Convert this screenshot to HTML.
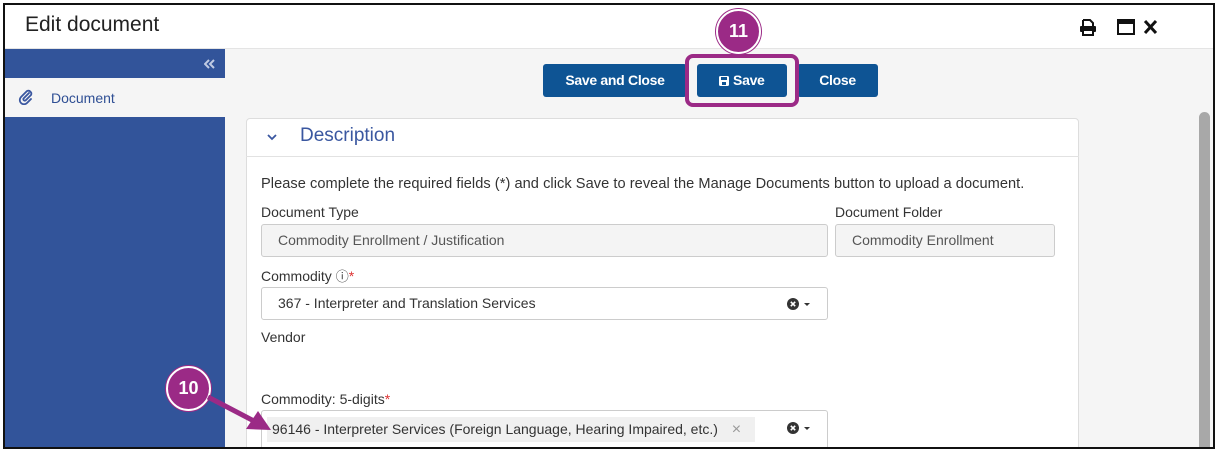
<!DOCTYPE html>
<html><head><meta charset="utf-8"><style>
*{box-sizing:border-box;margin:0;padding:0}
body{width:1222px;height:455px;background:#fff;font-family:"Liberation Sans",sans-serif;position:relative;overflow:hidden;color:#333}
.a{position:absolute}
.frame{left:3px;top:3px;width:1212px;height:446px;border:2px solid #111;overflow:hidden;background:#f5f5f5}
.lbl{font-size:14px;color:#333}
.inp{border:1px solid #ccc;border-radius:3px;font-size:14px;padding-left:16px;line-height:30px;height:33px}
.btn{background:#0e5494;color:#fff;font-weight:bold;font-size:14px;text-align:center;line-height:33px;border-radius:3px;height:33px;top:64px;letter-spacing:-0.3px}
.circ{border-radius:50%;background:#9b2a86;border:2px solid #fff;color:#fff;font-weight:bold;font-size:18px;text-align:center;box-shadow:0 0 0 1px #9b2a86}
.cx{position:absolute;right:14px;top:9px}
</style></head><body>
<div class="a frame">
 <div class="a" style="left:0;top:0;width:1210px;height:44px;background:#fff;border-bottom:1px solid #e4e4e4"></div>
 <div class="a" style="left:20px;top:8px;font-size:21px;color:#222">Edit document</div>
 <svg class="a" style="left:1074px;top:13px" width="90" height="18" viewBox="0 0 90 18">
  <path d="M4 2h7l3 3v3M4 2v6" fill="none" stroke="#111" stroke-width="2"/><rect x="1" y="8" width="16" height="6" rx="1" fill="#111"/><rect x="4" y="12" width="10" height="5" fill="#fff" stroke="#111" stroke-width="2"/>
  <rect x="39" y="2" width="16" height="14" fill="none" stroke="#111" stroke-width="2"/><rect x="39" y="2" width="16" height="4" fill="#111"/>
  <path d="M66 3l11 12M77 3L66 15" stroke="#111" stroke-width="3"/>
 </svg>
 <div class="a" style="left:0;top:44px;width:220px;height:400px;background:#32549a"></div>
 <svg class="a" style="left:199px;top:54px" width="12" height="10" viewBox="0 0 12 10"><path d="M5 1L1 5l4 4M10 1L6 5l4 4" fill="none" stroke="#c0cbe3" stroke-width="2"/></svg>
 <div class="a" style="left:0;top:73px;width:220px;height:39px;background:#f5f5f5"></div>
 <svg class="a" style="left:13px;top:84px" width="16" height="16" viewBox="0 0 16 16"><path d="M11 4L5.5 9.5a1.5 1.5 0 0 0 2 2L13 6a3 3 0 0 0-4-4L3 8a4.2 4.2 0 0 0 6 6l4-4" fill="none" stroke="#3a57a0" stroke-width="1.8" stroke-linecap="round"/></svg>
 <div class="a" style="left:46px;top:85px;color:#2f4f94;font-size:14px">Document</div>
 <div class="a btn" style="left:538px;width:144px;top:59px">Save and Close</div>
 <div class="a btn" style="left:692px;width:90px;top:59px"><svg width="10" height="10" viewBox="0 0 10 10" style="vertical-align:-1px"><rect x="0" y="0" width="10" height="10" rx="1.5" fill="#fff"/><rect x="2" y="1" width="6" height="3" fill="#0e5494"/><rect x="3" y="6" width="4" height="3" fill="#0e5494"/></svg> Save</div>
 <div class="a btn" style="left:792px;width:81px;top:59px">Close</div>
 <div class="a" style="left:680px;top:49px;width:114px;height:53px;border:4px solid #9b2a86;border-radius:8px"></div>
 <div class="a" style="left:241px;top:113px;width:833px;height:340px;background:#fff;border:1px solid #ddd;border-radius:4px"></div>
 <div class="a" style="left:241px;top:151px;width:833px;height:1px;background:#e2e2e2"></div>
 <svg class="a" style="left:261px;top:128px" width="12" height="8" viewBox="0 0 12 8"><path d="M2 2l4 4 4-4" fill="none" stroke="#3a57a0" stroke-width="1.8"/></svg>
 <div class="a" style="left:295px;top:120px;color:#3a57a0;font-size:19px">Description</div>
 <div class="a lbl" style="left:256px;top:171px;font-size:14.6px;letter-spacing:0.05px">Please complete the required fields (*) and click Save to reveal the Manage Documents button to upload a document.</div>
 <div class="a lbl" style="left:256px;top:199px">Document Type</div>
 <div class="a lbl" style="left:830px;top:199px">Document Folder</div>
 <div class="a inp" style="left:256px;top:219px;width:567px;background:#f4f4f4;color:#555">Commodity Enrollment / Justification</div>
 <div class="a inp" style="left:830px;top:219px;width:220px;background:#f4f4f4;color:#555">Commodity Enrollment</div>
 <div class="a lbl" style="left:256px;top:261px">Commodity <span style="font-size:13px">ⓘ</span><span style="color:#d33">*</span></div>
 <div class="a inp" style="left:256px;top:282px;width:567px;background:#fff;color:#333">367 - Interpreter and Translation Services
  <svg class="cx" width="26" height="14" viewBox="0 0 26 14"><circle cx="6" cy="7" r="6" fill="#333"/><path d="M3.8 4.8l4.4 4.4M8.2 4.8l-4.4 4.4" stroke="#fff" stroke-width="1.6"/><path d="M17 6h6l-3 3z" fill="#333"/></svg></div>
 <div class="a lbl" style="left:256px;top:324px">Vendor</div>
 <div class="a lbl" style="left:256px;top:386px">Commodity: 5-digits<span style="color:#d33">*</span></div>
 <div class="a inp" style="left:256px;top:405px;width:567px;height:40px;background:#fff;padding-left:5px;padding-top:3px"><span style="background:#f0f0f0;padding:0 14px 0 5px;display:inline-block;line-height:24px">96146 - Interpreter Services (Foreign Language, Hearing Impaired, etc.) <span style="color:#999;margin-left:10px;font-size:16px">×</span></span>
  <svg class="cx" style="top:10px" width="26" height="14" viewBox="0 0 26 14"><circle cx="6" cy="7" r="6" fill="#333"/><path d="M3.8 4.8l4.4 4.4M8.2 4.8l-4.4 4.4" stroke="#fff" stroke-width="1.6"/><path d="M17 6h6l-3 3z" fill="#333"/></svg></div>
 <div class="a" style="left:1194px;top:107px;width:11px;height:340px;background:#a8a8a8;border-radius:6px"></div>
</div>
<div class="a circ" style="left:716px;top:9px;width:45px;height:45px;line-height:41px">11</div>
<div class="a circ" style="left:166px;top:366px;width:45px;height:45px;line-height:41px">10</div>
<svg class="a" style="left:0;top:0" width="1222" height="455"><line x1="208" y1="397" x2="254" y2="421" stroke="#9b2a86" stroke-width="5"/><path d="M271 430L246 429L258 411Z" fill="#9b2a86"/></svg>
</body></html>
